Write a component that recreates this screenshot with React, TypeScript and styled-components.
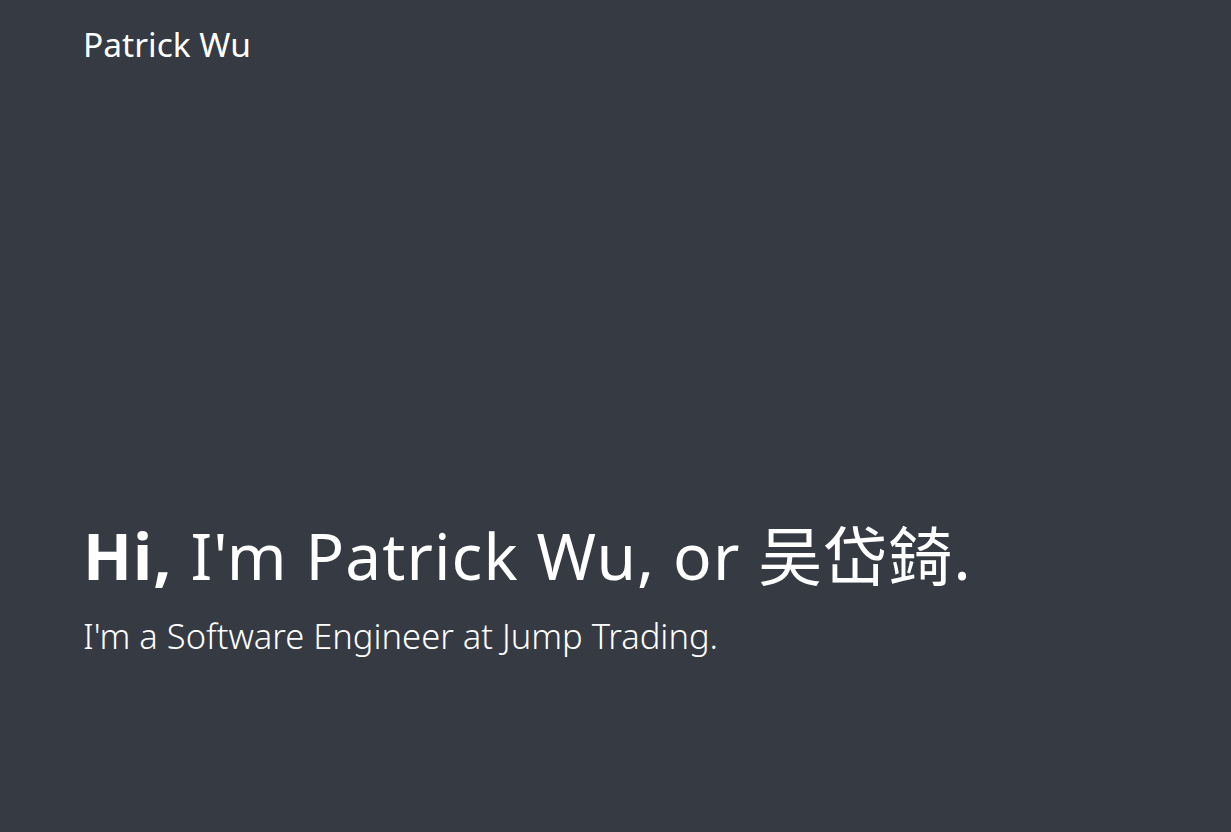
import React from "react";
import styled, { createGlobalStyle } from "styled-components";

const Global = createGlobalStyle`
  html, body { margin: 0; padding: 0; background: #363a42; }
  body { font-family: "Noto Sans", "Noto Sans CJK TC", sans-serif; color: #ffffff; }
`;

const Page = styled.div`
  min-height: 100vh;
  display: flex;
  flex-direction: column;
  padding: 0 83px;
  box-sizing: border-box;
`;

const Header = styled.header`
  display: flex;
  align-items: center;
  height: 88px;
`;

const Brand = styled.a`
  font-size: 33.5px;
  font-weight: 400;
  color: #ffffff;
  text-decoration: none;
`;

const Hero = styled.main`
  flex: 1;
  display: flex;
  flex-direction: column;
  justify-content: flex-end;
  padding-bottom: 173px;
`;

const Title = styled.h1`
  margin: 0;
  font-size: 64px;
  font-weight: 400;
  letter-spacing: 1.1px;
  line-height: 1.2;
`;

const Bold = styled.strong`
  font-weight: 700;
`;

const Subtitle = styled.p`
  margin: 19px 0 0;
  font-size: 34.5px;
  font-weight: 300;
  line-height: 1.3;
`;

export default function App() {
  return (
    <>
      <Global />
      <Page>
        <Header>
          <Brand href="#">Patrick Wu</Brand>
        </Header>
        <Hero>
          <Title>
            <Bold>Hi,</Bold> I'm Patrick Wu, or 吴岱錡.
          </Title>
          <Subtitle>I'm a Software Engineer at Jump Trading.</Subtitle>
        </Hero>
      </Page>
    </>
  );
}
